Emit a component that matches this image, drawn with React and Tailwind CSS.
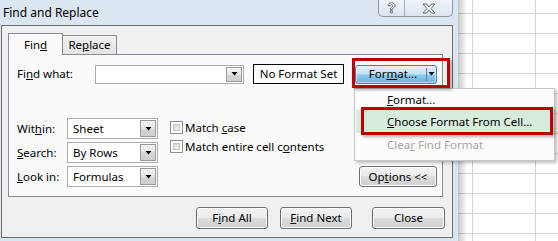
import React from "react";

const Tri = ({ c = "#000" }) => (
  <svg width="7" height="4" viewBox="0 0 7 4">
    <path d="M0.5 0H6.5L3.5 3.5Z" fill={c} />
  </svg>
);

function Combo({ cls, value }) {
  return (
    <div className={"flex border border-[#abadb3] bg-white " + cls}>
      <div className="flex-1 flex items-center pl-[5px] leading-none">
        <span>{value}</span>
      </div>
      <div className="w-[16px] m-px flex items-center justify-center border border-[#9a9a9a] bg-[linear-gradient(#f4f4f4_0%,#e6e6e6_50%,#d6d6d6_50%,#d0d0d0_100%)]">
        <Tri />
      </div>
    </div>
  );
}

function Btn({ cls, children }) {
  return (
    <div
      className={
        "flex items-center justify-center rounded-[3px] border border-[#707070] bg-[linear-gradient(#f2f2f2_0%,#ebebeb_50%,#dddddd_50%,#cfcfcf_100%)] shadow-[inset_0_0_0_1px_#fbfbfb] leading-none " +
        cls
      }
    >
      <span>{children}</span>
    </div>
  );
}

function Check({ children }) {
  return (
    <div className="h-[19px] flex items-center gap-[2px]">
      <div className="w-[13px] h-[13px] border border-[#8e8f8f] bg-white p-[2px]">
        <div className="w-full h-full border border-[#c4c4c4] bg-[linear-gradient(135deg,#d6d6d6,#f6f6f6)]" />
      </div>
      <span className="leading-none">{children}</span>
    </div>
  );
}

export default function App() {
  const rows = Array.from({ length: 11 });
  return (
    <div className="relative w-[558px] h-[241px] overflow-hidden flex bg-white text-[11.5px] text-black font-['Noto_Sans',sans-serif]">
      {/* Dialog window */}
      <div className="w-[458px] h-[241px] flex flex-col bg-[#dce6f1] shrink-0">
        {/* title bar */}
        <div className="h-[25px] flex items-start justify-between">
          <div className="pl-[3px] self-center text-[12px] leading-none text-black">Find and Replace</div>
          <div className="mr-[5px] flex h-[17px] border border-t-0 border-[#8a98ab] rounded-b-[5px] bg-[linear-gradient(#f1f5fa,#dbe4ef)]">
            <div className="w-[26px] flex items-center justify-center border-r border-[#a2aebe]">
              <svg width="9" height="12" viewBox="0 0 9 12">
                <path
                  d="M1 3.5C1 1.8 2.5 0.8 4.5 0.8S8 1.8 8 3.5c0 1.3-0.8 1.9-1.8 2.5-0.7 0.4-0.9 0.7-0.9 1.4v0.4H3.4V7.2c0-1.1 0.4-1.7 1.3-2.2 0.7-0.4 1-0.7 1-1.3 0-0.7-0.5-1.1-1.2-1.1-0.8 0-1.3 0.5-1.3 1.2Z M3.4 8.8h2v2h-2Z"
                  fill="#fff"
                  stroke="#5a6370"
                  strokeWidth="0.9"
                  strokeLinejoin="round"
                />
              </svg>
            </div>
            <div className="w-[47px] flex items-center justify-center">
              <svg width="14" height="11" viewBox="0 0 14 11">
                <path
                  d="M1 1h3.5L7 4 9.5 1H13L9 5.5 13 10H9.5L7 7 4.5 10H1L5 5.5Z"
                  fill="#fff"
                  stroke="#5a6370"
                  strokeWidth="1"
                  strokeLinejoin="round"
                />
              </svg>
            </div>
          </div>
        </div>
        {/* client area */}
        <div className="ml-px w-[452px] h-[213px] border border-[#6d6d6d] bg-[#f0f0f0] flex flex-col">
          {/* tabs */}
          <div className="ml-[6px] mt-[7px] h-[21px] flex items-end">
            <div className="self-start relative z-10 w-[55px] h-[22px] border border-b-0 border-[#898c95] bg-[#fafafa] flex items-center pl-[15px] leading-none">
              <span>
                Fin<span className="underline">d</span>
              </span>
            </div>
            <div className="w-[54px] h-[19px] border border-l-0 border-b-0 border-[#898c95] bg-[linear-gradient(#f2f2f2,#e3e3e3)] flex items-center justify-center leading-none">
              <span>
                Re<span className="underline">p</span>lace
              </span>
            </div>
          </div>
          {/* tab panel */}
          <div className="ml-[6px] w-[435px] h-[143px] border border-[#898c95] bg-[#fafafa] flex flex-col">
            <div className="mt-[9px] pl-[8px] h-[20px] flex items-center">
              <div className="w-[78px] leading-none">
                Fi<span className="underline">n</span>d what:
              </div>
              <Combo cls="w-[149px] h-[19px]" value="" />
              <div className="ml-[9px] w-[91px] h-[20px] border border-black bg-white flex items-center justify-center leading-none">
                <span>No Format Set</span>
              </div>
              <div className="ml-[11px] w-[82px] h-[19px] flex rounded-[3px] border border-[#3c7fb1] bg-[linear-gradient(#e3f2fc_0%,#c2e2f6_45%,#8cc6ec_55%,#6cb3e0_100%)] shadow-[inset_0_0_0_1px_rgba(255,255,255,0.5)]">
                <div className="w-[70px] flex items-center justify-center leading-none pl-[4px]">
                  <span>
                    For<span className="underline">m</span>at...
                  </span>
                </div>
                <div className="w-px my-[2px] bg-[#4d87b5]" />
                <div className="flex-1 flex items-center justify-center">
                  <Tri />
                </div>
              </div>
            </div>
            <div className="mt-[34px] pl-[8px] flex">
              <div className="flex flex-col gap-[3px]">
                <div className="flex items-center">
                  <div className="w-[50px] leading-none">
                    Wit<span className="underline">h</span>in:
                  </div>
                  <Combo cls="w-[91px] h-[21px]" value="Sheet" />
                </div>
                <div className="flex items-center">
                  <div className="w-[50px] leading-none">
                    <span className="underline">S</span>earch:
                  </div>
                  <Combo cls="w-[91px] h-[21px]" value="By Rows" />
                </div>
                <div className="flex items-center">
                  <div className="w-[50px] leading-none">
                    <span className="underline">L</span>ook in:
                  </div>
                  <Combo cls="w-[91px] h-[21px]" value="Formulas" />
                </div>
              </div>
              <div className="ml-[12px] flex flex-col">
                <Check>
                  Match <span className="underline">c</span>ase
                </Check>
                <Check>
                  Match entire cell c<span className="underline">o</span>ntents
                </Check>
              </div>
              <Btn cls="ml-auto mr-[5px] self-end w-[78px] h-[21px]">
                Op<span className="underline">t</span>ions &lt;&lt;
              </Btn>
            </div>
          </div>
          {/* bottom buttons */}
          <div className="mt-[10px] pr-[7px] flex justify-end">
            <Btn cls="w-[72px] h-[22px]">
              F<span className="underline">i</span>nd All
            </Btn>
            <Btn cls="ml-[12px] w-[72px] h-[22px]">
              <span className="underline">F</span>ind Next
            </Btn>
            <Btn cls="ml-[20px] w-[73px] h-[22px]">Close</Btn>
          </div>
        </div>
      </div>

      {/* Spreadsheet behind */}
      <div className="relative flex-1 flex flex-col">
        <div className="h-[14px] flex border-b border-[#d4d4d4] shrink-0">
          <div className="w-[15px] border-r border-[#d4d4d4]" />
          <div className="w-[63px] border-r border-[#d4d4d4]" />
          <div className="flex-1" />
        </div>
        {rows.map((_, i) => (
          <div key={i} className="h-[20px] flex border-b border-[#d4d4d4] shrink-0">
            <div className="w-[15px] border-r border-[#d4d4d4]" />
            <div className="w-[63px] border-r border-[#d4d4d4]" />
            <div className="flex-1" />
          </div>
        ))}
        <div className="flex-1 flex">
          <div className="w-[15px] border-r border-[#d4d4d4]" />
          <div className="w-[63px] border-r border-[#d4d4d4]" />
        </div>
        <div className="absolute left-0 top-0 bottom-0 w-[9px] bg-[linear-gradient(90deg,rgba(0,0,0,0.22),rgba(0,0,0,0))]" />
      </div>

      {/* Dropdown menu */}
      <div className="absolute left-[354px] top-[88px] w-[201px] h-[73px] border border-[#c6c6c6] bg-[#fcfcfc] shadow-[2px_2px_3px_rgba(0,0,0,0.25)] flex flex-col">
        <div className="h-[21px] flex items-center pl-[32px] leading-none">
          <span>
            <span className="underline">F</span>ormat...
          </span>
        </div>
        <div className="h-[23px] ml-px mr-[2px] flex items-center pl-[31px] bg-[#d7ecdc] leading-none">
          <span>
            <span className="underline">C</span>hoose Format From Cell...
          </span>
        </div>
        <div className="h-[24px] flex items-center pl-[32px] leading-none text-[#a6a6a6]">
          <span>
            Clea<span className="underline">r</span> Find Format
          </span>
        </div>
      </div>

      {/* Red highlight boxes */}
      <div className="absolute left-[352px] top-[58px] w-[98px] h-[30px] border-[3px] border-[#c00000] shadow-[2px_2px_3px_rgba(0,0,0,0.3)]" />
      <div className="absolute left-[361px] top-[107px] w-[192px] h-[28px] border-[3px] border-[#c00000] shadow-[2px_2px_3px_rgba(0,0,0,0.3)]" />
    </div>
  );
}
